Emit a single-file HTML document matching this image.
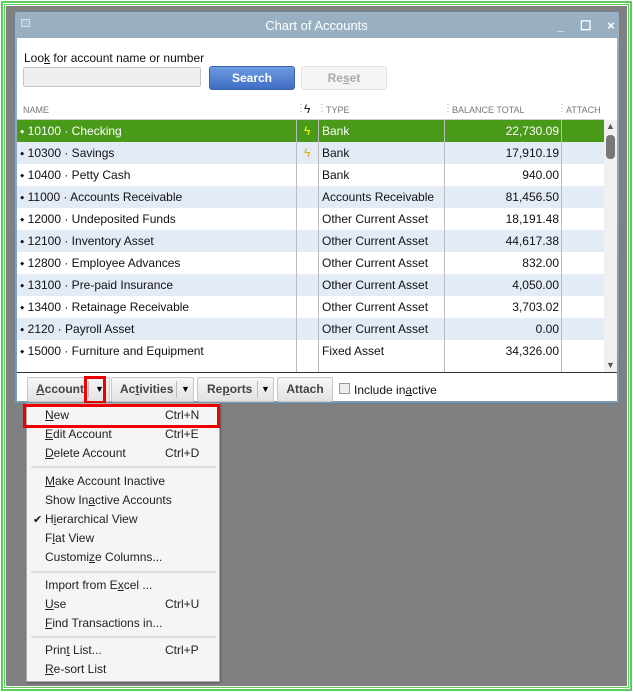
<!DOCTYPE html>
<html><head><style>
*{margin:0;padding:0;box-sizing:border-box}
body{width:633px;height:692px;background:#fff;font-family:"Liberation Sans",Arial,sans-serif;font-size:12px;color:#111;position:relative;overflow:hidden}
.a{position:absolute}
.row{position:absolute;left:17px;width:587px;height:22px;line-height:22px}
.row span{position:absolute;top:0}
.mi{position:absolute;left:45px;font-size:12px;color:#222}
.sc{position:absolute;left:165px;font-size:12px;color:#222}
.sep{position:absolute;left:31px;width:185px;height:2px;background:#ddd}
.btn{position:absolute;top:377px;height:25px;border:1px solid #c8c8c8;border-radius:2px;background:linear-gradient(#f6f6f6,#e2e2e2);font-weight:bold;color:#444;line-height:23px;font-size:12px}
</style></head><body>
<div class="a" style="left:1px;top:1px;width:631px;height:690px;border:2px solid #5ccc5c"></div>
<div class="a" style="left:4px;top:4px;width:625px;height:684px;border:1px solid #5ccc5c"></div>
<div class="a" style="left:6px;top:6px;width:621px;height:680px;background:#808080"></div>
<!-- window -->
<div class="a" style="left:14px;top:11px;width:606px;height:393px;background:linear-gradient(#9ab1c3,#7f98ac);border:1px solid #6d8194;border-radius:3px 3px 0 0"></div>
<div class="a" style="left:21px;top:19px;width:9px;height:8px;border:1px solid #dde;background:#a8bccb"></div>
<div class="a" style="left:0;width:633px;top:18px;text-align:center;color:#fff;font-size:13px">Chart of Accounts</div>
<div class="a" style="left:557px;top:18px;color:#fff;font-size:13px;font-weight:bold;letter-spacing:6px">_ ☐ ×</div>
<div class="a" style="left:17px;top:38px;width:600px;height:363px;background:#fff"></div>
<div class="a" style="left:24px;top:51px;font-size:12px">Loo<u>k</u> for account name or number</div>
<div class="a" style="left:23px;top:67px;width:178px;height:20px;border:1px solid #c4c4c4;border-radius:2px;background:#efefef"></div>
<div class="a" style="left:209px;top:66px;width:86px;height:24px;border:1px solid #3a64b0;border-radius:3px;background:linear-gradient(#6e9ce0,#3f6cc4);color:#fff;font-weight:bold;text-align:center;line-height:22px">Search</div>
<div class="a" style="left:301px;top:66px;width:86px;height:24px;border:1px solid #e2e2e2;border-radius:3px;background:#f4f4f4;color:#aaa;font-weight:bold;text-align:center;line-height:22px">Re<u>s</u>et</div>
<!-- header -->
<div class="a" style="left:23px;top:105px;font-size:9px;color:#777">NAME</div>
<div class="a" style="left:296px;top:103px;color:#aaa;font-size:10px">⋮</div>
<div class="a" style="left:304px;top:102px;font-size:12px;color:#222">ϟ</div>
<div class="a" style="left:317px;top:103px;color:#aaa;font-size:10px">⋮</div>
<div class="a" style="left:326px;top:105px;font-size:9px;color:#777">TYPE</div>
<div class="a" style="left:443px;top:103px;color:#aaa;font-size:10px">⋮</div>
<div class="a" style="left:452px;top:105px;font-size:9px;color:#777">BALANCE TOTAL</div>
<div class="a" style="left:557px;top:103px;color:#aaa;font-size:10px">⋮</div>
<div class="a" style="left:566px;top:105px;font-size:9px;color:#777">ATTACH</div>
<div class="a" style="left:17px;top:119px;width:587px;height:1px;background:#ccc"></div>
<!-- rows -->
<div class="row" style="top:120px;background:#4a9a1a;color:#fff"><span style="left:3px">⬩ 10100 · Checking</span><span style="left:287px;color:#ff0">ϟ</span><span style="left:305px">Bank</span><span style="left:427px;width:115px;text-align:right">22,730.09</span></div>
<div class="row" style="top:142px;background:#e3ebf7"><span style="left:3px">⬩ 10300 · Savings</span><span style="left:287px;color:#d8b000">ϟ</span><span style="left:305px">Bank</span><span style="left:427px;width:115px;text-align:right">17,910.19</span></div>
<div class="row" style="top:164px"><span style="left:3px">⬩ 10400 · Petty Cash</span><span style="left:305px">Bank</span><span style="left:427px;width:115px;text-align:right">940.00</span></div>
<div class="row" style="top:186px;background:#e3ebf7"><span style="left:3px">⬩ 11000 · Accounts Receivable</span><span style="left:305px">Accounts Receivable</span><span style="left:427px;width:115px;text-align:right">81,456.50</span></div>
<div class="row" style="top:208px"><span style="left:3px">⬩ 12000 · Undeposited Funds</span><span style="left:305px">Other Current Asset</span><span style="left:427px;width:115px;text-align:right">18,191.48</span></div>
<div class="row" style="top:230px;background:#e3ebf7"><span style="left:3px">⬩ 12100 · Inventory Asset</span><span style="left:305px">Other Current Asset</span><span style="left:427px;width:115px;text-align:right">44,617.38</span></div>
<div class="row" style="top:252px"><span style="left:3px">⬩ 12800 · Employee Advances</span><span style="left:305px">Other Current Asset</span><span style="left:427px;width:115px;text-align:right">832.00</span></div>
<div class="row" style="top:274px;background:#e3ebf7"><span style="left:3px">⬩ 13100 · Pre-paid Insurance</span><span style="left:305px">Other Current Asset</span><span style="left:427px;width:115px;text-align:right">4,050.00</span></div>
<div class="row" style="top:296px"><span style="left:3px">⬩ 13400 · Retainage Receivable</span><span style="left:305px">Other Current Asset</span><span style="left:427px;width:115px;text-align:right">3,703.02</span></div>
<div class="row" style="top:318px;background:#e3ebf7"><span style="left:3px">⬩ 2120 · Payroll Asset</span><span style="left:305px">Other Current Asset</span><span style="left:427px;width:115px;text-align:right">0.00</span></div>
<div class="row" style="top:340px"><span style="left:3px">⬩ 15000 · Furniture and Equipment</span><span style="left:305px">Fixed Asset</span><span style="left:427px;width:115px;text-align:right">34,326.00</span></div>
<div class="a" style="left:296px;top:120px;width:1px;height:252px;background:#bbb"></div>
<div class="a" style="left:318px;top:120px;width:1px;height:252px;background:#bbb"></div>
<div class="a" style="left:444px;top:120px;width:1px;height:252px;background:#bbb"></div>
<div class="a" style="left:561px;top:120px;width:1px;height:252px;background:#bbb"></div>
<div class="a" style="left:17px;top:372px;width:600px;height:1px;background:#333"></div>
<!-- scrollbar -->
<div class="a" style="left:604px;top:120px;width:13px;height:252px;background:#f0f0f0"></div>
<div class="a" style="left:606px;top:121px;font-size:9px;color:#555">▲</div>
<div class="a" style="left:606px;top:135px;width:9px;height:24px;background:#777;border-radius:4px"></div>
<div class="a" style="left:606px;top:360px;font-size:9px;color:#555">▼</div>
<!-- buttons -->
<div class="btn" style="left:27px;width:83px"><span style="position:absolute;left:8px"><u>A</u>ccount</span><span style="position:absolute;left:60px;top:3px;width:1px;height:17px;background:#bbb"></span><span style="position:absolute;left:67px;font-size:9px;color:#000">▼</span></div>
<div class="a" style="left:84px;top:376px;width:22px;height:28px;border:3px solid #e00"></div>
<div class="btn" style="left:111px;width:83px"><span style="position:absolute;left:8px">Ac<u>t</u>ivities</span><span style="position:absolute;left:64px;top:3px;width:1px;height:17px;background:#bbb"></span><span style="position:absolute;left:69px;font-size:9px;color:#000">▼</span></div>
<div class="btn" style="left:197px;width:77px"><span style="position:absolute;left:9px">Re<u>p</u>orts</span><span style="position:absolute;left:59px;top:3px;width:1px;height:17px;background:#bbb"></span><span style="position:absolute;left:63px;font-size:9px;color:#000">▼</span></div>
<div class="btn" style="left:277px;width:56px;text-align:center">Attach</div>
<div class="a" style="left:339px;top:383px;width:11px;height:11px;border:1px solid #999;background:#eee"></div>
<div class="a" style="left:354px;top:383px;font-size:12px">Include in<u>a</u>ctive</div>
<!-- menu -->
<div class="a" style="left:26px;top:403px;width:194px;height:279px;background:#f5f5f5;border:1px solid #aaa;box-shadow:1px 1px 2px rgba(0,0,0,.3)"></div>
<div class="a" style="left:23px;top:404px;width:197px;height:24px;border:3px solid #e00"></div>
<div class="mi" style="top:408px"><u>N</u>ew</div><div class="sc" style="top:408px">Ctrl+N</div>
<div class="mi" style="top:427px"><u>E</u>dit Account</div><div class="sc" style="top:427px">Ctrl+E</div>
<div class="mi" style="top:446px"><u>D</u>elete Account</div><div class="sc" style="top:446px">Ctrl+D</div>
<div class="sep" style="top:466px"></div>
<div class="mi" style="top:474px"><u>M</u>ake Account Inactive</div>
<div class="mi" style="top:493px">Show In<u>a</u>ctive Accounts</div>
<div class="a" style="left:33px;top:513px;font-size:11px">✔</div>
<div class="mi" style="top:512px">H<u>i</u>erarchical View</div>
<div class="mi" style="top:531px">F<u>l</u>at View</div>
<div class="mi" style="top:550px">Customi<u>z</u>e Columns...</div>
<div class="sep" style="top:571px"></div>
<div class="mi" style="top:578px">Import from E<u>x</u>cel ...</div>
<div class="mi" style="top:597px"><u>U</u>se</div><div class="sc" style="top:597px">Ctrl+U</div>
<div class="mi" style="top:616px"><u>F</u>ind Transactions in...</div>
<div class="sep" style="top:636px"></div>
<div class="mi" style="top:643px">Prin<u>t</u> List...</div><div class="sc" style="top:643px">Ctrl+P</div>
<div class="mi" style="top:662px"><u>R</u>e-sort List</div>
</body></html>
